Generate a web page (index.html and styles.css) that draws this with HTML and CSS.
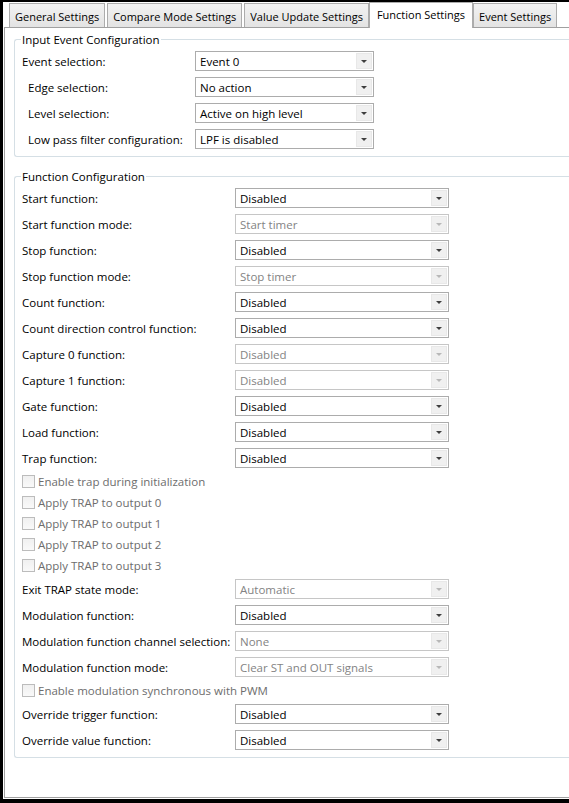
FILE: index.html
```html
<!DOCTYPE html>
<html>
<head>
<meta charset="utf-8">
<link rel="stylesheet" href="styles.css">
</head>
<body>
<div class="frame">
  <div class="tabs">
    <div class="tab">General Settings</div>
    <div class="tab">Compare Mode Settings</div>
    <div class="tab">Value Update Settings</div>
    <div class="tab active">Function Settings</div>
    <div class="tab">Event Settings</div>
  </div>
  <div class="panel">
    <fieldset class="group g1">
      <legend>Input Event Configuration</legend>
      <div class="rows">
        <div class="row"><span class="lbl">Event selection:</span><div class="combo"><span class="val">Event 0</span><span class="btn"><span class="tri"></span></span></div></div>
        <div class="row"><span class="lbl indent">Edge selection:</span><div class="combo"><span class="val">No action</span><span class="btn"><span class="tri"></span></span></div></div>
        <div class="row"><span class="lbl indent">Level selection:</span><div class="combo"><span class="val">Active on high level</span><span class="btn"><span class="tri"></span></span></div></div>
        <div class="row"><span class="lbl indent">Low pass filter configuration:</span><div class="combo"><span class="val">LPF is disabled</span><span class="btn"><span class="tri"></span></span></div></div>
      </div>
    </fieldset>
    <fieldset class="group g2">
      <legend>Function Configuration</legend>
      <div class="rows">
        <div class="row"><span class="lbl">Start function:</span><div class="combo"><span class="val">Disabled</span><span class="btn"><span class="tri"></span></span></div></div>
        <div class="row"><span class="lbl">Start function mode:</span><div class="combo dis"><span class="val">Start timer</span><span class="btn"><span class="tri"></span></span></div></div>
        <div class="row"><span class="lbl">Stop function:</span><div class="combo"><span class="val">Disabled</span><span class="btn"><span class="tri"></span></span></div></div>
        <div class="row"><span class="lbl">Stop function mode:</span><div class="combo dis"><span class="val">Stop timer</span><span class="btn"><span class="tri"></span></span></div></div>
        <div class="row"><span class="lbl">Count function:</span><div class="combo"><span class="val">Disabled</span><span class="btn"><span class="tri"></span></span></div></div>
        <div class="row"><span class="lbl">Count direction control function:</span><div class="combo"><span class="val">Disabled</span><span class="btn"><span class="tri"></span></span></div></div>
        <div class="row"><span class="lbl">Capture 0 function:</span><div class="combo dis"><span class="val">Disabled</span><span class="btn"><span class="tri"></span></span></div></div>
        <div class="row"><span class="lbl">Capture 1 function:</span><div class="combo dis"><span class="val">Disabled</span><span class="btn"><span class="tri"></span></span></div></div>
        <div class="row"><span class="lbl">Gate function:</span><div class="combo"><span class="val">Disabled</span><span class="btn"><span class="tri"></span></span></div></div>
        <div class="row"><span class="lbl">Load function:</span><div class="combo"><span class="val">Disabled</span><span class="btn"><span class="tri"></span></span></div></div>
        <div class="row"><span class="lbl">Trap function:</span><div class="combo"><span class="val">Disabled</span><span class="btn"><span class="tri"></span></span></div></div>
        <div class="check"><span class="box"></span><span class="ctext">Enable trap during initialization</span></div>
        <div class="check"><span class="box"></span><span class="ctext">Apply TRAP to output 0</span></div>
        <div class="check"><span class="box"></span><span class="ctext">Apply TRAP to output 1</span></div>
        <div class="check"><span class="box"></span><span class="ctext">Apply TRAP to output 2</span></div>
        <div class="check"><span class="box"></span><span class="ctext">Apply TRAP to output 3</span></div>
        <div class="row"><span class="lbl">Exit TRAP state mode:</span><div class="combo dis"><span class="val">Automatic</span><span class="btn"><span class="tri"></span></span></div></div>
        <div class="row"><span class="lbl">Modulation function:</span><div class="combo"><span class="val">Disabled</span><span class="btn"><span class="tri"></span></span></div></div>
        <div class="row"><span class="lbl">Modulation function channel selection:</span><div class="combo dis"><span class="val">None</span><span class="btn"><span class="tri"></span></span></div></div>
        <div class="row"><span class="lbl">Modulation function mode:</span><div class="combo dis"><span class="val">Clear ST and OUT signals</span><span class="btn"><span class="tri"></span></span></div></div>
        <div class="check"><span class="box"></span><span class="ctext">Enable modulation synchronous with PWM</span></div>
        <div class="row"><span class="lbl">Override trigger function:</span><div class="combo"><span class="val">Disabled</span><span class="btn"><span class="tri"></span></span></div></div>
        <div class="row"><span class="lbl">Override value function:</span><div class="combo"><span class="val">Disabled</span><span class="btn"><span class="tri"></span></span></div></div>
      </div>
    </fieldset>
  </div>
</div>
</body>
</html>
```

FILE: styles.css
```css
html, body {
  margin: 0;
  padding: 0;
  height: 100%;
  overflow: hidden;
  background: #ffffff;
}

body {
  font-family: "Open Sans", "Noto Sans", "Liberation Sans", sans-serif;
  font-size: 11.5px;
  color: #000000;
}

.frame {
  height: 803px;
  box-sizing: border-box;
  border-top: 2px solid #000000;
  border-left: 3px solid #000000;
  border-bottom: 4px solid #000000;
  padding-left: 1px;
  display: flex;
  flex-direction: column;
}

.tabs {
  display: flex;
  align-items: flex-end;
  height: 25px;
  padding-left: 5px;
  position: relative;
  z-index: 1;
  font-size: 11px;
}

.tab {
  height: 24px;
  box-sizing: border-box;
  margin-right: 2px;
  padding: 2px 5px 0 5px;
  border: 1px solid #acacac;
  border-bottom: none;
  background: linear-gradient(#f2f2f2, #e3e3e3);
  display: flex;
  align-items: center;
  white-space: nowrap;
}

.tab.active {
  height: 26px;
  margin: 0 0 -1px -2px;
  padding: 0 7px 2px 7px;
  background: #ffffff;
}

.panel {
  flex: 1;
  margin-bottom: 1px;
  border-top: 1px solid #a0a0a0;
  border-left: 1px solid #a0a0a0;
  border-bottom: 1px solid #a0a0a0;
  padding-left: 9px;
}

.group {
  margin: 4px 0 0 0;
  padding: 0 0 7px 7px;
  border: 1px solid #d5dfe5;
  border-right: none;
  border-radius: 3px 0 0 3px;
  min-width: 0;
}

.group.g2 {
  margin-top: 12px;
}

.group legend {
  margin-left: -1px;
  padding: 0 1px;
  line-height: 15px;
}

.rows {
  margin-top: 4px;
  display: flex;
  flex-direction: column;
  gap: 6px;
}

.row {
  display: flex;
  align-items: center;
  height: 20px;
}

.lbl {
  white-space: nowrap;
  flex: none;
}

.g1 .lbl {
  width: 173px;
}

.g2 .lbl {
  width: 213px;
}

.lbl.indent {
  padding-left: 6px;
  box-sizing: border-box;
}

.combo {
  height: 20px;
  box-sizing: border-box;
  border: 1px solid #acacac;
  background: #ffffff;
  display: flex;
  align-items: stretch;
}

.g1 .combo {
  width: 179px;
}

.g2 .combo {
  width: 214px;
}

.val {
  flex: 1;
  padding-left: 4px;
  display: flex;
  align-items: center;
  white-space: nowrap;
  overflow: hidden;
}

.btn {
  width: 16px;
  margin: 1px;
  box-sizing: border-box;
  border: 1px solid #e8e8e8;
  background: #f0f0f0;
  display: flex;
  align-items: center;
  justify-content: center;
}

.tri {
  width: 0;
  height: 0;
  border-left: 3px solid transparent;
  border-right: 3px solid transparent;
  border-top: 3px solid #3e3e3e;
  margin-top: 1px;
}

.combo.dis {
  border-color: #c6c6c6;
}

.combo.dis .val {
  color: #838383;
}

.combo.dis .tri {
  border-top-color: #b8b8b8;
}

.check {
  display: flex;
  align-items: center;
  height: 15px;
  color: #6d6d6d;
}

.box {
  width: 13px;
  height: 13px;
  box-sizing: border-box;
  border: 1px solid #bcbcbc;
  background: linear-gradient(#f0f0f0, #f9f9f9);
  margin-right: 3px;
  flex: none;
}
```
